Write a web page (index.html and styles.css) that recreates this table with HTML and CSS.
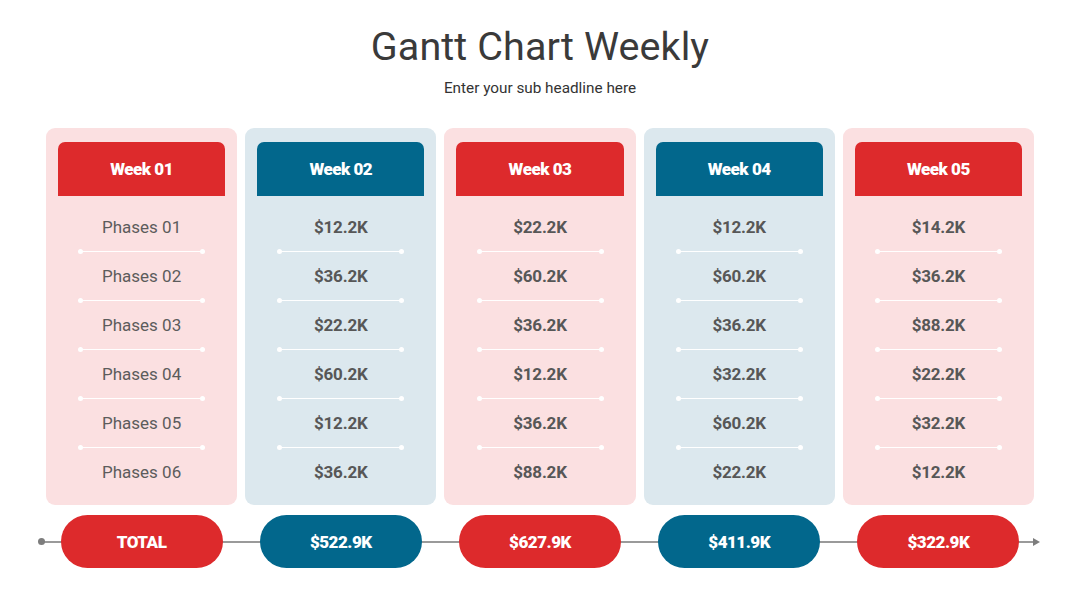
FILE: index.html
```html
<!DOCTYPE html>
<html>
<head>
<meta charset="utf-8">
<link rel="stylesheet" href="styles.css">
</head>
<body>
<div class="page">
  <header class="head">
    <h1 class="title">Gantt Chart Weekly</h1>
    <p class="sub">Enter your sub headline here</p>
  </header>
  <div class="cols">
    <div class="col red">
      <div class="wk">Week 01</div>
      <div class="rows phases">
        <div class="row">Phases 01</div><div class="sep"></div>
        <div class="row">Phases 02</div><div class="sep"></div>
        <div class="row">Phases 03</div><div class="sep"></div>
        <div class="row">Phases 04</div><div class="sep"></div>
        <div class="row">Phases 05</div><div class="sep"></div>
        <div class="row">Phases 06</div>
      </div>
    </div>
    <div class="col blue">
      <div class="wk">Week 02</div>
      <div class="rows">
        <div class="row">$12.2K</div><div class="sep"></div>
        <div class="row">$36.2K</div><div class="sep"></div>
        <div class="row">$22.2K</div><div class="sep"></div>
        <div class="row">$60.2K</div><div class="sep"></div>
        <div class="row">$12.2K</div><div class="sep"></div>
        <div class="row">$36.2K</div>
      </div>
    </div>
    <div class="col red">
      <div class="wk">Week 03</div>
      <div class="rows">
        <div class="row">$22.2K</div><div class="sep"></div>
        <div class="row">$60.2K</div><div class="sep"></div>
        <div class="row">$36.2K</div><div class="sep"></div>
        <div class="row">$12.2K</div><div class="sep"></div>
        <div class="row">$36.2K</div><div class="sep"></div>
        <div class="row">$88.2K</div>
      </div>
    </div>
    <div class="col blue">
      <div class="wk">Week 04</div>
      <div class="rows">
        <div class="row">$12.2K</div><div class="sep"></div>
        <div class="row">$60.2K</div><div class="sep"></div>
        <div class="row">$36.2K</div><div class="sep"></div>
        <div class="row">$32.2K</div><div class="sep"></div>
        <div class="row">$60.2K</div><div class="sep"></div>
        <div class="row">$22.2K</div>
      </div>
    </div>
    <div class="col red">
      <div class="wk">Week 05</div>
      <div class="rows">
        <div class="row">$14.2K</div><div class="sep"></div>
        <div class="row">$36.2K</div><div class="sep"></div>
        <div class="row">$88.2K</div><div class="sep"></div>
        <div class="row">$22.2K</div><div class="sep"></div>
        <div class="row">$32.2K</div><div class="sep"></div>
        <div class="row">$12.2K</div>
      </div>
    </div>
  </div>
  <div class="totals">
    <div class="axis"><span class="dot"></span><span class="arrow"></span></div>
    <div class="cell"><div class="pill red">TOTAL</div></div>
    <div class="cell"><div class="pill blue">$522.9K</div></div>
    <div class="cell"><div class="pill red">$627.9K</div></div>
    <div class="cell"><div class="pill blue">$411.9K</div></div>
    <div class="cell"><div class="pill red">$322.9K</div></div>
  </div>
</div>
</body>
</html>
```
FILE: styles.css
```css
* { box-sizing: border-box; margin: 0; padding: 0; }
html, body { width: 1080px; height: 608px; background: #fff; overflow: hidden; }
body { font-family: Roboto, "Liberation Sans", sans-serif; }

.page { width: 1080px; height: 608px; padding: 0 46px 0 46px; }

.head { display: flex; flex-direction: column; align-items: center; padding-top: 23px; height: 128px; }
.title { font-size: 39.5px; font-weight: 400; color: #3a3a3a; line-height: 48px; letter-spacing: 0.1px; }
.sub { font-size: 15.3px; color: #333; line-height: 18px; margin-top: 8px; }

.cols { display: flex; gap: 8px; height: 377px; }
.col { flex: 1 1 0; border-radius: 9px; padding: 14px 12px 9px; display: flex; flex-direction: column; }
.col.red { background: #fbe0e1; }
.col.blue { background: #dce8ee; }

.wk { flex: 0 0 54px; height: 54px; border-radius: 7px 7px 0 0; color: #fff; font-weight: 900; font-size: 17px;
      display: flex; align-items: center; justify-content: center; letter-spacing: -0.5px; }
.red .wk { background: #dd2a2c; }
.blue .wk { background: #02678c; }

.rows { flex: 0 0 auto; display: flex; flex-direction: column; align-items: center; margin-top: 7px; }
.row { flex: 0 0 48px; height: 48px; width: 100%; display: flex; align-items: center; justify-content: center;
       font-size: 17px; font-weight: 700; color: #575757; letter-spacing: -0.2px; }
.phases .row { font-weight: 400; color: #5c5c5c; letter-spacing: 0; }

.sep { flex: 0 0 1px; position: relative; width: 123px; height: 1px; background: #fff; }
.sep::before, .sep::after { content: ""; position: absolute; top: -2px; width: 5px; height: 5px; border-radius: 50%; background: #fff; }
.sep::before { left: -2px; }
.sep::after { right: -2px; }

.totals { position: relative; display: flex; gap: 8px; margin-top: 10px; height: 53px; }
.axis { position: absolute; left: -5px; right: 0; top: 26px; height: 1.5px; background: #9a9a9a; }
.dot { position: absolute; left: -3px; top: -3px; width: 7px; height: 7px; border-radius: 50%; background: #7d7d7d; }
.arrow { position: absolute; right: -6px; top: -3.5px; width: 0; height: 0;
         border-left: 7px solid #7d7d7d; border-top: 4px solid transparent; border-bottom: 4px solid transparent; }
.cell { flex: 1 1 0; display: flex; justify-content: center; position: relative; }
.pill { width: 162px; height: 53px; border-radius: 27px; color: #fff; font-weight: 900; font-size: 17px;
        display: flex; align-items: center; justify-content: center; letter-spacing: -0.5px; }
.pill.red { background: #dd2a2c; }
.pill.blue { background: #02678c; }
```
